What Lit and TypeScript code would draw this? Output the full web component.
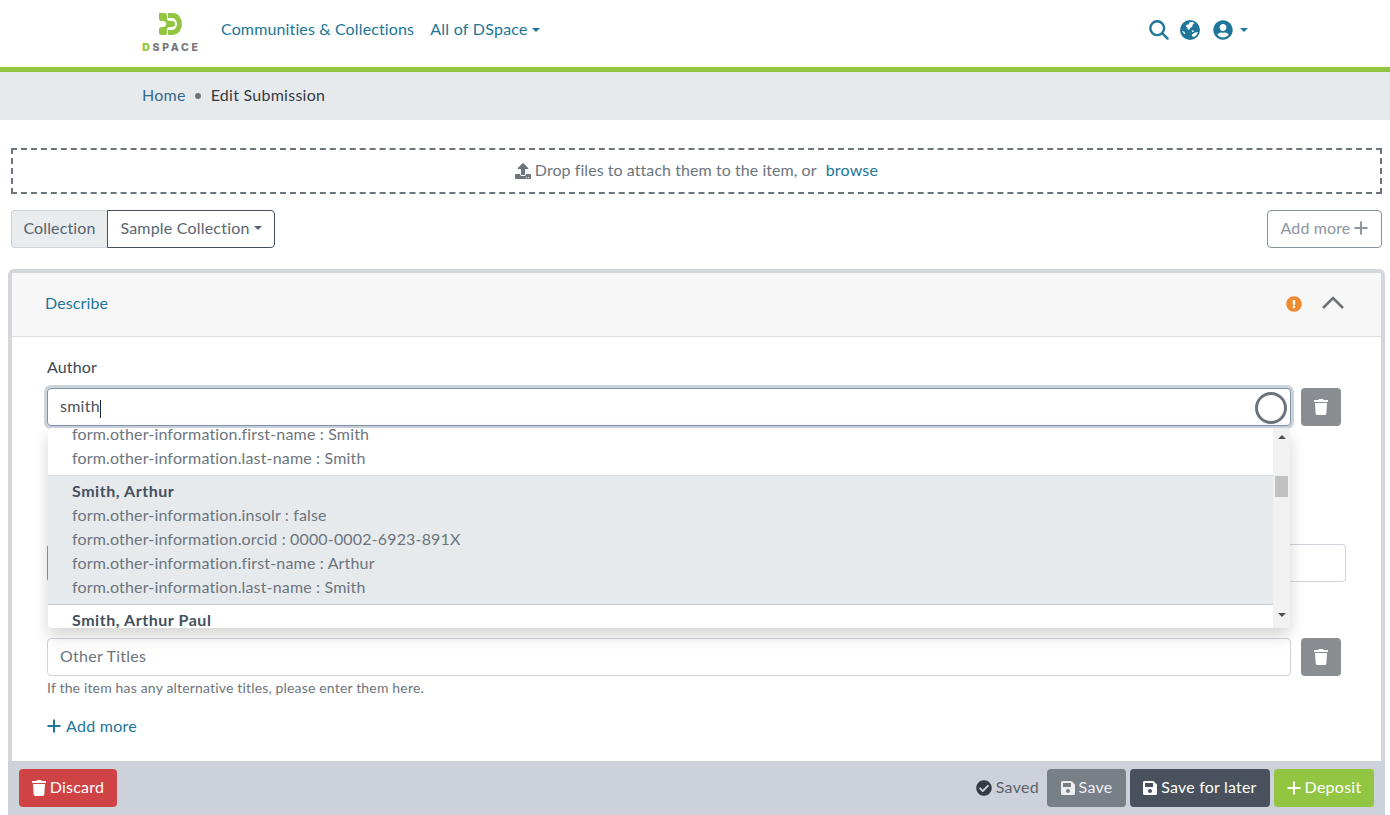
import { LitElement, html, css, svg } from "lit";
import { customElement } from "lit/decorators.js";

const fa = (vb: string, d: string, cls = "ic") =>
  html`<svg class=${cls} viewBox=${vb} fill="currentColor" aria-hidden="true"><path d=${d}></path></svg>`;
const trash = (cls = "ic") => fa("0 0 448 512", "M432 32H312l-9.4-18.7A24 24 0 0 0 281.1 0H166.8a23.72 23.72 0 0 0-21.4 13.3L136 32H16A16 16 0 0 0 0 48v32a16 16 0 0 0 16 16h416a16 16 0 0 0 16-16V48a16 16 0 0 0-16-16zM53.2 467a48 48 0 0 0 47.9 45h245.8a48 48 0 0 0 47.9-45L416 128H32z", cls);
const save = () => fa("0 0 448 512", "M433.941 129.941l-83.882-83.882A48 48 0 0 0 316.118 32H48C21.49 32 0 53.49 0 80v352c0 26.51 21.49 48 48 48h352c26.51 0 48-21.49 48-48V163.882a48 48 0 0 0-14.059-33.941zM224 416c-35.346 0-64-28.654-64-64 0-35.346 28.654-64 64-64s64 28.654 64 64c0 35.346-28.654 64-64 64zm96-304.52V212c0 6.627-5.373 12-12 12H76c-6.627 0-12-5.373-12-12V108c0-6.627 5.373-12 12-12h228.52c3.183 0 6.235 1.264 8.485 3.515l3.48 3.48A11.996 11.996 0 0 1 320 111.48z");
const plus = () => html`<svg class="ic plus" viewBox="0 0 14 14" fill="none" stroke="currentColor" stroke-width="2" aria-hidden="true"><path d="M7 0.5v13M0.5 7h13"></path></svg>`;

@customElement("app-root")
export class AppRoot extends LitElement {
  static styles = css`
    :host { display: flex; flex-direction: column; height: 100vh; overflow: hidden; background: #fff; color: #343a40;
      font: 16px/24px Lato, "Open Sans", sans-serif; letter-spacing: .13px; }
    * { box-sizing: border-box; }
    a { color: #207698; text-decoration: none; }
    .ic { width: 14px; height: 16px; flex: none; display: block; }
    .plus { width: 14px; height: 14px; }

    .top { flex: none; height: 72px; border-bottom: 5px solid #92c642; display: flex; align-items: center; padding: 0 142px 0 141px; }
    .logo { width: 58px; display: flex; flex-direction: column; align-items: center; margin-top: -1px; }
    .logo svg { width: 23px; height: 22px; display: block; margin-left: 1px; }
    .logo span { font: 800 10.5px/12px Inter, sans-serif; letter-spacing: 2.7px; color: #75787b; margin-top: 7px; margin-right: -3px; white-space: nowrap; }
    .logo b { color: #92c642; }
    .nav { display: flex; margin-left: 22px; gap: 16px; margin-top: -10px; }
    .nav a + a { letter-spacing: .26px; }
    .caret { display: inline-block; border-top: 4.8px solid currentColor; border-left: 4.2px solid transparent; border-right: 4.2px solid transparent; margin-left: 4px; vertical-align: 3px; }
    .tools { margin-left: auto; display: flex; align-items: center; color: #207698; margin-top: -8px; }
    .tools svg { display: block; }
    .t-search { width: 20px; height: 20px; }
    .t-globe { width: 20px; height: 20px; margin-left: 11px; }
    .t-user { width: 20px; height: 20px; margin-left: 13px; }
    .tools .caret { margin-left: 7px; vertical-align: 0; }

    .crumbs { flex: none; height: 48px; background: #e7eaed; padding: 0 0 2px 142px; display: flex; align-items: center; letter-spacing: .26px; }
    .crumbs a { color: #34688c; }
    .dot { width: 6px; height: 6px; border-radius: 50%; background: #6c757d; margin: 2px 10px 0 9px; }

    .main { flex: 1; min-height: 0; overflow: hidden; padding: 28px 5px 0 8px; }
    .drop { height: 46px; margin: 0 3px; border: 2px dashed #6c757d; color: #6c757d; display: flex; align-items: center; justify-content: center; padding-bottom: 3px; letter-spacing: .06px; }
    .drop .ic { width: 16px; height: 16px; margin: 2px 4px 0 0; }
    .drop a { margin-left: 9px; letter-spacing: .2px; }
    .coll { display: flex; margin: 16px 3px 21px; height: 38px; }
    .coll-label { width: 96px; background: #e9ecef; border: 1px solid #ced4da; border-right: 0; border-radius: 4px 0 0 4px; display: flex; align-items: center; justify-content: center; color: #56616c; padding-bottom: 2px; }
    .coll-btn { width: 168px; border: 1px solid #43515f; border-radius: 0 4px 4px 0; display: flex; align-items: center; justify-content: center; color: #5a6570; padding-bottom: 2px; letter-spacing: .2px; }
    .add-top { margin-left: auto; width: 115px; border: 1px solid #87919b; border-radius: 4px; display: flex; align-items: center; justify-content: center; gap: 4px; color: #8d959d; padding-bottom: 2px; }

    .card { border: 4px solid #d3d7dc; border-radius: 6px 6px 0 0; height: 560px; }
    .card-head { height: 64px; background: #f7f7f7; border-bottom: 1px solid #dfdfdf; display: flex; align-items: center; padding: 0 37px 3px 33px; }
    .warn { width: 16px; height: 16px; margin: 2px 0 0 auto; color: #ef8a2d; }
    .chev { width: 24px; height: 14px; margin: -2px 0 0 18px; color: #6b7177; }
    .card-body { position: relative; padding: 18px 40px 0 35px; }
    .label { display: block; margin-bottom: 9px; color: #3d4751; }
    .row { display: flex; gap: 10px; }
    .input { display: flex; align-items: center; flex: 1; height: 38px; border: 1px solid #ced4da; border-radius: 4px; padding: 0 12px 2px; background: #fff; color: #495057; font: inherit; min-width: 0; letter-spacing: .26px; }
    input.input { padding-bottom: 3px; }
    .input::placeholder { color: #6c757d; opacity: 1; }
    .focus { border-color: #7f93ab; box-shadow: 0 0 0 3px #cdd3da; position: relative; }
    .cursor { width: 1px; height: 18px; background: #1d2730; margin-top: 6px; }
    .spin { position: absolute; right: 3px; top: 3px; width: 32px; height: 32px; border: 3px solid #6b747c; border-radius: 50%; }
    .del { width: 40px; height: 38px; flex: none; border-radius: 4px; background: #8a8e92; color: #fff; display: flex; align-items: center; justify-content: center; }
    .del .ic { width: 14px; height: 16px; }
    .second { margin: 118px -5px 0 0; height: 38px; display: flex; }
    .second .input { border-left-color: #8e969d; }
    .third { margin-top: 56px; }
    .help { font-size: 14px; line-height: 19px; color: #6c757d; margin-top: 2px; letter-spacing: .17px; }
    .add { display: flex; align-items: center; gap: 5px; margin-top: 17px; color: #207698; letter-spacing: .26px; }

    .menu { position: absolute; left: 36px; top: 91px; width: 1242px; height: 200px; background: #fff; border-radius: 4px; box-shadow: 0 8px 16px rgba(0,0,0,.17); overflow: hidden; display: flex; z-index: 2; color: #6c757d; letter-spacing: .16px; }
    .list { flex: 1; min-width: 0; }
    .item { padding: 3px 24px 5px; border-bottom: 1px solid #d6dadf; }
    .item.cut { padding-top: 0; margin-top: -6px; }
    .item.on { background: #e7eaed; border-bottom-color: #c8cdd3; }
    .item.last { border: 0; }
    .item b { display: block; font-weight: 700; color: #43515f; letter-spacing: .55px; }
    .bar { width: 17px; flex: none; background: #f1f1f1; display: flex; flex-direction: column; align-items: center; padding-top: 7px; }
    .bar i { display: block; border-left: 4px solid transparent; border-right: 4px solid transparent; }
    .up { border-bottom: 4px solid #505050; }
    .dn { border-top: 4px solid #505050; margin-top: 116px; }
    .thumb { width: 13px; height: 21px; background: #c1c1c1; margin-top: 37px; }
    .foot { flex: none; height: 54px; margin: 0 5px 0 8px; background: #cdd1d9; display: flex; align-items: center; padding: 0 11px 0 11px; gap: 4px; }
    .btn { height: 38px; border-radius: 4px; color: #fff; display: flex; align-items: center; justify-content: center; gap: 4px; padding-bottom: 2px; }
    .btn .ic { width: 14px; height: 16px; margin-top: 2px; }
    .discard { width: 98px; background: #cf4345; letter-spacing: .26px; }
    .save { width: 79px; background: #777f87; color: #eceef0; letter-spacing: .26px; }
    .later { width: 140px; background: #49525c; letter-spacing: .2px; }
    .deposit { width: 100px; background: #92c642; letter-spacing: .26px; }
    .saved { margin-left: auto; margin-right: 4px; display: flex; align-items: center; gap: 4px; color: #5b646d; padding-bottom: 2px; letter-spacing: .3px; }
    .saved svg { width: 16px; height: 16px; color: #343a40; margin-top: 2px; }
  `;

  render() {
    return html`
      <header class="top">
        <div class="logo">
          <svg viewBox="0 0 23 22" fill="#92c642" aria-hidden="true">
            <path d="M9 0h5a9 11 0 0 1 9 11 9 11 0 0 1-9 11h-5v-5h4a5 6 0 0 0 5-6 5 6 0 0 0-5-6h-4z"></path>
            <path d="M0 0h5a3 3 0 0 1 3 3v2a3 3 0 0 0 3 3h2a3 3 0 0 1 0 6h-2a3 3 0 0 0-3 3v3a2 2 0 0 1-2 2H2a2 2 0 0 1-2-2v-3a3 3 0 0 1 3-3h1a3 3 0 0 0 0-6H2a2 2 0 0 1-2-2V0z"></path>
          </svg>
          <span><b>D</b>SPACE</span>
        </div>
        <nav class="nav">
          <a href="#">Communities &amp; Collections</a>
          <a href="#">All of DSpace<i class="caret"></i></a>
        </nav>
        <div class="tools">
          <svg class="t-search" viewBox="0 0 20 20" fill="none" stroke="currentColor" stroke-width="2.4" stroke-linecap="round" aria-hidden="true"><circle cx="8.2" cy="8.2" r="6.9"></circle><path d="M13.4 13.4l5.2 5.2"></path></svg>
          <svg class="t-globe" viewBox="0 0 20 20" aria-hidden="true"><circle cx="10" cy="10" r="10" fill="currentColor"></circle>
            ${svg`<path fill="#fff" d="M9.5 2.2l3.5-.2 1.2 1.6-1.6 1.2-.4 2-1.8 1-1.2 2-1.6-.6-.2-1.8-1.6-.8.8-1.8 2-.4zM11.6 10.2l1.8.2.4 1.4-1.6.2zM15 12.6l2.8-.6-.8 2.6-2.6 2.2-2.4-.4-.2-1.8 1.6-1zM2 11l2 .4 1.4 2-1.2.6z"></path>`}
          </svg>
          ${fa("0 0 496 512", "M248 8C111 8 0 119 0 256s111 248 248 248 248-111 248-248S385 8 248 8zm0 96c48.6 0 88 39.4 88 88s-39.4 88-88 88-88-39.4-88-88 39.4-88 88-88zm0 344c-58.7 0-111.3-26.6-146.5-68.2 18.8-35.4 55.6-59.8 98.5-59.8 2.4 0 4.8.4 7.1 1.1 13 4.2 26.6 6.9 40.9 6.9 14.3 0 28-2.7 40.9-6.9 2.3-.7 4.7-1.1 7.1-1.1 42.9 0 79.7 24.4 98.5 59.8C359.3 421.4 306.7 448 248 448z", "t-user")}
          <i class="caret"></i>
        </div>
      </header>
      <div class="crumbs"><a href="#">Home</a><span class="dot"></span><span>Edit Submission</span></div>
      <main class="main">
        <div class="drop">
          ${fa("0 0 512 512", "M296 384h-80c-13.3 0-24-10.7-24-24V192h-87.7c-17.8 0-26.7-21.5-14.1-34.1L242.3 5.7c7.5-7.5 19.8-7.5 27.3 0l152.2 152.2c12.6 12.6 3.7 34.1-14.1 34.1H320v168c0 13.3-10.7 24-24 24zm216-8v112c0 13.3-10.7 24-24 24H24c-13.3 0-24-10.7-24-24V376c0-13.3 10.7-24 24-24h136v8c0 30.9 25.1 56 56 56h80c30.9 0 56-25.1 56-56v-8h136c13.3 0 24 10.7 24 24zm-124 88c0-11-9-20-20-20s-20 9-20 20 9 20 20 20 20-9 20-20zm64 0c0-11-9-20-20-20s-20 9-20 20 9 20 20 20 20-9 20-20z")}
          <span>Drop files to attach them to the item, or</span><a href="#">browse</a>
        </div>
        <div class="coll">
          <div class="coll-label">Collection</div>
          <div class="coll-btn">Sample Collection<i class="caret"></i></div>
          <div class="add-top">Add more ${plus()}</div>
        </div>
        <section class="card">
          <div class="card-head">
            <a href="#">Describe</a>
            ${fa("0 0 512 512", "M504 256c0 136.997-111.043 248-248 248S8 392.997 8 256C8 119.083 119.043 8 256 8s248 111.083 248 248zm-248 50c-25.405 0-46 20.595-46 46s20.595 46 46 46 46-20.595 46-46-20.595-46-46-46zm-43.673-165.346l7.418 136c.347 6.364 5.609 11.346 11.982 11.346h48.546c6.373 0 11.635-4.982 11.982-11.346l7.418-136c.375-6.874-5.098-12.654-11.982-12.654h-63.383c-6.884 0-12.356 5.78-11.981 12.654z", "warn")}
            <svg class="chev" viewBox="0 0 24 14" fill="none" stroke="currentColor" stroke-width="2.6" aria-hidden="true"><path d="M3 13L13 3l10 10"></path></svg>
          </div>
          <div class="card-body">
            <span class="label">Author</span>
            <div class="row">
              <div class="input focus">smith<span class="cursor"></span><span class="spin"></span></div>
              <div class="del">${trash()}</div>
            </div>
            <div class="menu">
              <div class="list">
                <div class="item cut">
                  <div>form.other-information.first-name : Smith</div>
                  <div>form.other-information.last-name : Smith</div>
                </div>
                <div class="item on">
                  <b>Smith, Arthur</b>
                  <div>form.other-information.insolr : false</div>
                  <div>form.other-information.orcid : 0000-0002-6923-891X</div>
                  <div>form.other-information.first-name : Arthur</div>
                  <div>form.other-information.last-name : Smith</div>
                </div>
                <div class="item last"><b>Smith, Arthur Paul</b></div>
              </div>
              <div class="bar"><i class="up"></i><span class="thumb"></span><i class="dn"></i></div>
            </div>
            <div class="second"><input class="input" aria-label="Title" /></div>
            <div class="row third">
              <input class="input" placeholder="Other Titles" />
              <div class="del">${trash()}</div>
            </div>
            <div class="help">If the item has any alternative titles, please enter them here.</div>
            <a class="add" href="#">${plus()}Add more</a>
          </div>
        </section>
      </main>
      <footer class="foot">
        <div class="btn discard">${trash()}Discard</div>
        <div class="saved">${fa("0 0 512 512", "M504 256c0 136.967-111.033 248-248 248S8 392.967 8 256 119.033 8 256 8s248 111.033 248 248zM227.314 387.314l184-184c6.248-6.248 6.248-16.379 0-22.627l-22.627-22.627c-6.248-6.249-16.379-6.249-22.628 0L216 308.118l-70.059-70.059c-6.248-6.248-16.379-6.248-22.628 0l-22.627 22.627c-6.248 6.248-6.248 16.379 0 22.627l104 104c6.249 6.249 16.379 6.249 22.628.001z", "")}Saved</div>
        <div class="btn save">${save()}Save</div>
        <div class="btn later">${save()}Save for later</div>
        <div class="btn deposit">${plus()}Deposit</div>
      </footer>
    `;
  }
}
